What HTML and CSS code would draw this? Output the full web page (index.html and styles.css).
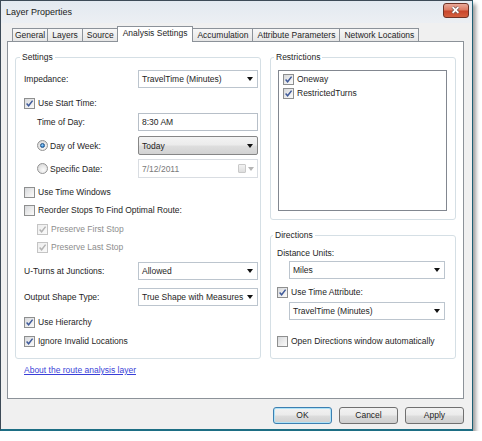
FILE: index.html
```html
<!DOCTYPE html>
<html>
<head>
<meta charset="utf-8">
<link rel="stylesheet" href="styles.css">
</head>
<body>
<div class="window">
  <div class="titlebar">
    <span class="title">Layer Properties</span>
    <span class="close"><svg viewBox="0 0 26 15" width="26" height="15"><path class="xo" d="M10 4 L16 10 M16 4 L10 10"/><path class="xi" d="M10 4 L16 10 M16 4 L10 10"/></svg></span>
  </div>
  <div class="client">
    <div class="tabs">
      <div class="tab first">General</div>
      <div class="tab">Layers</div>
      <div class="tab">Source</div>
      <div class="tab active">Analysis Settings</div>
      <div class="tab">Accumulation</div>
      <div class="tab">Attribute Parameters</div>
      <div class="tab">Network Locations</div>
    </div>
    <div class="panel">
      <div class="columns">
        <fieldset class="group settings">
          <legend>Settings</legend>
          <div class="row">
            <span class="lbl">Impedance:</span>
            <div class="select"><span>TravelTime (Minutes)</span><i class="arrow"></i></div>
          </div>
          <div class="row mt6">
            <span class="cb"><svg viewBox="0 0 9 9"><path d="M1.6 4.6 L3.6 6.8 L7.6 1.6"/></svg></span>
            <span>Use Start Time:</span>
          </div>
          <div class="row mt1">
            <span class="lbl sub">Time of Day:</span>
            <div class="select textbox"><span>8:30 AM</span></div>
          </div>
          <div class="row tall mt5">
            <span class="lbl sub radio-lbl"><span class="rb on"></span><span>Day of Week:</span></span>
            <div class="select combo"><span>Today</span><i class="arrow"></i></div>
          </div>
          <div class="row tall mt4">
            <span class="lbl sub radio-lbl"><span class="rb"></span><span>Specific Date:</span></span>
            <div class="select disabled"><span>7/12/2011</span><span class="cal"><i class="calicon"></i><i class="arrow light"></i></span></div>
          </div>
          <div class="row mt5">
            <span class="cb empty"></span>
            <span>Use Time Windows</span>
          </div>
          <div class="row">
            <span class="cb empty"></span>
            <span>Reorder Stops To Find Optimal Route:</span>
          </div>
          <div class="row mt1 indent dim">
            <span class="cb disabled"><svg viewBox="0 0 9 9"><path d="M1.6 4.6 L3.6 6.8 L7.6 1.6"/></svg></span>
            <span>Preserve First Stop</span>
          </div>
          <div class="row indent dim">
            <span class="cb disabled"><svg viewBox="0 0 9 9"><path d="M1.6 4.6 L3.6 6.8 L7.6 1.6"/></svg></span>
            <span>Preserve Last Stop</span>
          </div>
          <div class="row mt6">
            <span class="lbl">U-Turns at Junctions:</span>
            <div class="select"><span>Allowed</span><i class="arrow"></i></div>
          </div>
          <div class="row mt8">
            <span class="lbl">Output Shape Type:</span>
            <div class="select"><span>True Shape with Measures</span><i class="arrow"></i></div>
          </div>
          <div class="row mt7">
            <span class="cb"><svg viewBox="0 0 9 9"><path d="M1.6 4.6 L3.6 6.8 L7.6 1.6"/></svg></span>
            <span>Use Hierarchy</span>
          </div>
          <div class="row mt1">
            <span class="cb"><svg viewBox="0 0 9 9"><path d="M1.6 4.6 L3.6 6.8 L7.6 1.6"/></svg></span>
            <span>Ignore Invalid Locations</span>
          </div>
        </fieldset>
        <div class="rightcol">
          <fieldset class="group restrictions">
            <legend>Restrictions</legend>
            <div class="listbox">
              <div class="item">
                <span class="cb"><svg viewBox="0 0 9 9"><path d="M1.6 4.6 L3.6 6.8 L7.6 1.6"/></svg></span>
                <span>Oneway</span>
              </div>
              <div class="item">
                <span class="cb"><svg viewBox="0 0 9 9"><path d="M1.6 4.6 L3.6 6.8 L7.6 1.6"/></svg></span>
                <span>RestrictedTurns</span>
              </div>
            </div>
          </fieldset>
          <fieldset class="group directions">
            <legend>Directions</legend>
            <div class="plain">Distance Units:</div>
            <div class="select wide mt2"><span>Miles</span><i class="arrow"></i></div>
            <div class="row short mt5">
              <span class="cb"><svg viewBox="0 0 9 9"><path d="M1.6 4.6 L3.6 6.8 L7.6 1.6"/></svg></span>
              <span>Use Time Attribute:</span>
            </div>
            <div class="select wide mt2"><span>TravelTime (Minutes)</span><i class="arrow"></i></div>
            <div class="row short mt13">
              <span class="cb empty"></span>
              <span>Open Directions window automatically</span>
            </div>
          </fieldset>
        </div>
      </div>
      <a class="link" href="#">About the route analysis layer</a>
    </div>
    <div class="buttons">
      <div class="btn default">OK</div>
      <div class="btn">Cancel</div>
      <div class="btn">Apply</div>
    </div>
  </div>
</div>
</body>
</html>
```
FILE: styles.css
```css
html, body {
  margin: 0;
  padding: 0;
  background: #ffffff;
}
body {
  font-family: "Liberation Sans", Arial, sans-serif;
  font-size: 8.5px;
  line-height: 12px;
  color: #1e1e1e;
}
.window {
  width: 473px;
  height: 431px;
  box-sizing: border-box;
  border: 1px solid #3d4a57;
  border-right-color: #1d5f74;
  border-bottom: 2px solid #1d6e84;
  background: #f0f0f0;
  box-shadow: 3px 4px 4px rgba(0, 0, 0, 0.38);
  display: flex;
  flex-direction: column;
}
.titlebar {
  height: 22px;
  display: flex;
  justify-content: space-between;
  align-items: flex-start;
  background: linear-gradient(#e3e9f0, #eceff3);
}
.title {
  font-size: 9px;
  line-height: 22px;
  padding-left: 5px;
  color: #1b1b1b;
}
.close {
  margin-top: 2px;
  margin-right: 3px;
  width: 26px;
  height: 15px;
  box-sizing: border-box;
  border: 1px solid #6e3226;
  border-radius: 3px;
  background: linear-gradient(#eaa999 0%, #dc7b64 45%, #c9462c 55%, #d4603f 100%);
  display: flex;
  overflow: hidden;
}
.close svg {
  margin: -1px 0 0 -1px;
}
.close .xo {
  stroke: #7a5a55;
  stroke-width: 3.4;
  fill: none;
}
.close .xi {
  stroke: #ffffff;
  stroke-width: 1.8;
  fill: none;
}
.client {
  padding: 0 8px 0 6px;
  display: flex;
  flex-direction: column;
}
.tabs {
  display: flex;
  align-items: flex-end;
  height: 16px;
  margin-top: 3px;
  margin-bottom: -1px;
  padding-left: 5px;
  position: relative;
  z-index: 1;
}
.tab {
  height: 13px;
  box-sizing: border-box;
  margin-bottom: 1px;
  margin-right: -1px;
  padding: 0 4px;
  border: 1px solid #8c9299;
  border-bottom: none;
  background: linear-gradient(#f7f7f7, #e6e6e6);
  line-height: 12px;
  white-space: nowrap;
}
.tab.first {
  padding: 0 2px;
}
.tab.active {
  height: 16px;
  margin-bottom: 0;
  margin-left: -1px;
  margin-right: -1px;
  padding: 0 5px;
  background: #ffffff;
  line-height: 13px;
  position: relative;
  z-index: 2;
}
.panel {
  height: 358px;
  box-sizing: border-box;
  border: 1px solid #8c9299;
  background: #ffffff;
  padding: 9px 7px 0 7px;
}
.columns {
  display: flex;
  gap: 9px;
  height: 308px;
}
.group {
  margin: 0;
  border: 1px solid #d5dfe5;
  border-radius: 3px;
  min-width: 0;
}
.group legend {
  padding: 0 2px;
  margin-left: -4px;
  line-height: 12px;
}
.settings {
  width: 246px;
  box-sizing: border-box;
  padding: 7px 5px 7px 8px;
}
.rightcol {
  width: 186px;
  display: flex;
  flex-direction: column;
  gap: 9px;
}
.restrictions {
  height: 169px;
  box-sizing: border-box;
  padding: 7px 8px 7px 7px;
}
.directions {
  flex: 1;
  box-sizing: border-box;
  padding: 6px 9px 0 6px;
}
.row {
  display: flex;
  align-items: center;
  height: 18px;
  gap: 3px;
  white-space: nowrap;
}
.row.tall {
  height: 19px;
}
.row.short {
  height: 16px;
}
.row.indent {
  padding-left: 13px;
}
.dim {
  color: #8d8d8d;
}
.mt1 { margin-top: 1px; }
.mt2 { margin-top: 2px; }
.mt4 { margin-top: 4px; }
.mt5 { margin-top: 5px; }
.mt6 { margin-top: 6px; }
.mt7 { margin-top: 7px; }
.mt8 { margin-top: 8px; }
.mt13 { margin-top: 13px; }
.lbl {
  width: 111px;
  flex: none;
  box-sizing: border-box;
}
.lbl.sub {
  padding-left: 13px;
}
.radio-lbl {
  display: flex;
  align-items: center;
  gap: 2px;
  padding-left: 11px;
}
.select {
  width: 120px;
  height: 18px;
  box-sizing: border-box;
  border: 1px solid #bcc5ce;
  background: #ffffff;
  display: flex;
  align-items: center;
  justify-content: space-between;
  padding: 0 4px 0 3px;
  white-space: nowrap;
  flex: none;
}
.select.textbox {
  border-color: #b7bfc8;
}
.row.tall .select {
  height: 19px;
}
.select.combo {
  border-color: #868686;
  border-radius: 2px;
  background: linear-gradient(#f3f3f3 0%, #ebebeb 48%, #dedede 52%, #d2d2d2 100%);
}
.select.disabled {
  border-color: #d9dde2;
  color: #7a7a7a;
}
.select.wide {
  width: 156px;
  margin-left: 12px;
  height: 18px;
}
.arrow {
  width: 0;
  height: 0;
  border-left: 3px solid transparent;
  border-right: 3px solid transparent;
  border-top: 4px solid #111111;
}
.arrow.light {
  border-top-color: #b5b5b5;
}
.cal {
  display: flex;
  align-items: center;
  gap: 2px;
  margin-right: -1px;
}
.calicon {
  width: 8px;
  height: 9px;
  box-sizing: border-box;
  border: 1px solid #c9c9c9;
  border-radius: 1px;
  background: linear-gradient(#f2f2f2, #dedede);
}
.cb {
  width: 11px;
  height: 11px;
  box-sizing: border-box;
  border: 1px solid #8e8f8f;
  background: linear-gradient(135deg, #d6d8db 0%, #eeeeee 60%, #fbfbfb 100%);
  display: inline-flex;
  align-items: center;
  justify-content: center;
  flex: none;
}
.cb svg {
  width: 9px;
  height: 9px;
  fill: none;
  stroke: #3f5a9a;
  stroke-width: 1.5;
}
.cb.disabled {
  border-color: #c4c4c4;
  background: linear-gradient(135deg, #eeeeee, #fafafa);
}
.cb.disabled svg {
  stroke: #b3b3b3;
}
.rb {
  width: 11px;
  height: 11px;
  box-sizing: border-box;
  border-radius: 50%;
  border: 1px solid #939393;
  background: radial-gradient(circle at 60% 65%, #fbfbfb 0%, #e4e4e4 55%, #cfcfcf 100%);
  display: inline-flex;
  align-items: center;
  justify-content: center;
  flex: none;
}
.rb.on::after {
  content: "";
  width: 5px;
  height: 5px;
  border-radius: 50%;
  box-sizing: border-box;
  border: 1px solid #23548a;
  background: radial-gradient(circle at 40% 35%, #a9dcff 0%, #3d8fd6 60%, #1d5a9a 100%);
}
.listbox {
  height: 141px;
  box-sizing: border-box;
  border: 1px solid #828790;
  background: #ffffff;
  padding: 1px 0 0 4px;
}
.item {
  display: flex;
  align-items: center;
  gap: 3px;
  height: 14px;
}
.plain {
  line-height: 12px;
}
.link {
  display: inline-block;
  margin-top: 5px;
  margin-left: 9px;
  color: #3a3fd8;
  text-decoration: underline;
  line-height: 12px;
}
.buttons {
  display: flex;
  justify-content: flex-end;
  gap: 7px;
  margin-top: 8px;
}
.btn {
  width: 59px;
  height: 17px;
  box-sizing: border-box;
  border: 1px solid #707070;
  border-radius: 3px;
  background: linear-gradient(#f2f2f2 0%, #ebebeb 48%, #dddddd 52%, #cfcfcf 100%);
  text-align: center;
  line-height: 15px;
}
.btn.default {
  border-color: #3c7fb1;
  box-shadow: inset 0 0 0 1px #aee2f7;
}
```
